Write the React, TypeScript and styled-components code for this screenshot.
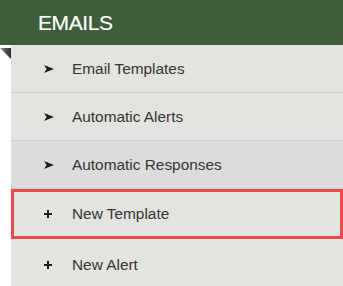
import React from 'react';
import styled, { createGlobalStyle } from 'styled-components';

const GlobalStyle = createGlobalStyle`
  html, body {
    margin: 0;
    padding: 0;
    background: #ffffff;
    font-family: 'Liberation Sans', Arial, sans-serif;
  }
`;

const Panel = styled.div`
  width: 343px;
  height: 286px;
  overflow: hidden;
  background: #ffffff;
`;

const Header = styled.div`
  height: 45px;
  background: #3e5e3a;
  display: flex;
  align-items: center;
  padding-left: 38px;
  color: #ffffff;
  font-size: 21px;
  letter-spacing: -0.4px;
  text-shadow: 0 0 1px rgba(255, 255, 255, 0.4);
`;

const Body = styled.div`
  display: flex;
`;

const Gutter = styled.div`
  width: 11px;
  flex: none;
`;

const Menu = styled.ul`
  flex: 1;
  margin: 0;
  padding: 0;
  list-style: none;
  background: #e3e3df;
`;

const Item = styled.li<{ $shaded?: boolean; $active?: boolean }>`
  display: flex;
  align-items: center;
  height: ${({ $active }) => ($active ? '44px' : '47px')};
  padding-left: ${({ $active }) => ($active ? '30px' : '33px')};
  background: ${({ $shaded }) => ($shaded ? '#dcdcdc' : '#e3e3df')};
  border: ${({ $active }) => ($active ? '3px solid #e84c4a' : 'none')};
  border-bottom: ${({ $active }) => ($active ? '3px solid #e84c4a' : '1px solid #cdcdcd')};
  margin-bottom: ${({ $active }) => ($active ? '2px' : '0')};
  color: #353535;
  font-size: 15.4px;
  cursor: pointer;
`;

const Icon = styled.span`
  width: 28px;
  display: flex;
  align-items: center;
  flex: none;
`;

const Arrow = () => (
  <svg width="10" height="8" viewBox="0 0 10 8">
    <path d="M0 0 L10 4 L0 8 L2.6 4 Z" fill="#1e1e1e" />
  </svg>
);

const Plus = () => (
  <svg width="8" height="8" viewBox="0 0 8 8">
    <path d="M3 0h2v3h3v2H5v3H3V5H0V3h3z" fill="#1e1e1e" />
  </svg>
);

const Corner = () => (
  <svg width="11" height="11" viewBox="0 0 11 11">
    <defs>
      <linearGradient id="fold" x1="0" y1="0" x2="1" y2="0">
        <stop offset="0" stopColor="#a8a8a8" />
        <stop offset="0.45" stopColor="#5a5a5a" />
        <stop offset="1" stopColor="#2c2c2c" />
      </linearGradient>
    </defs>
    <polygon points="0,0 11,0 11,11" fill="url(#fold)" />
  </svg>
);

const items = [
  { label: 'Email Templates', kind: 'arrow' },
  { label: 'Automatic Alerts', kind: 'arrow' },
  { label: 'Automatic Responses', kind: 'arrow', shaded: true },
  { label: 'New Template', kind: 'plus', active: true },
  { label: 'New Alert', kind: 'plus' },
];

const App: React.FC = () => (
  <Panel>
    <GlobalStyle />
    <Header>EMAILS</Header>
    <Body>
      <Gutter>
        <Corner />
      </Gutter>
      <Menu>
        {items.map((it) => (
          <Item key={it.label} $shaded={it.shaded} $active={it.active}>
            <Icon>{it.kind === 'arrow' ? <Arrow /> : <Plus />}</Icon>
            {it.label}
          </Item>
        ))}
      </Menu>
    </Body>
  </Panel>
);

export default App;
